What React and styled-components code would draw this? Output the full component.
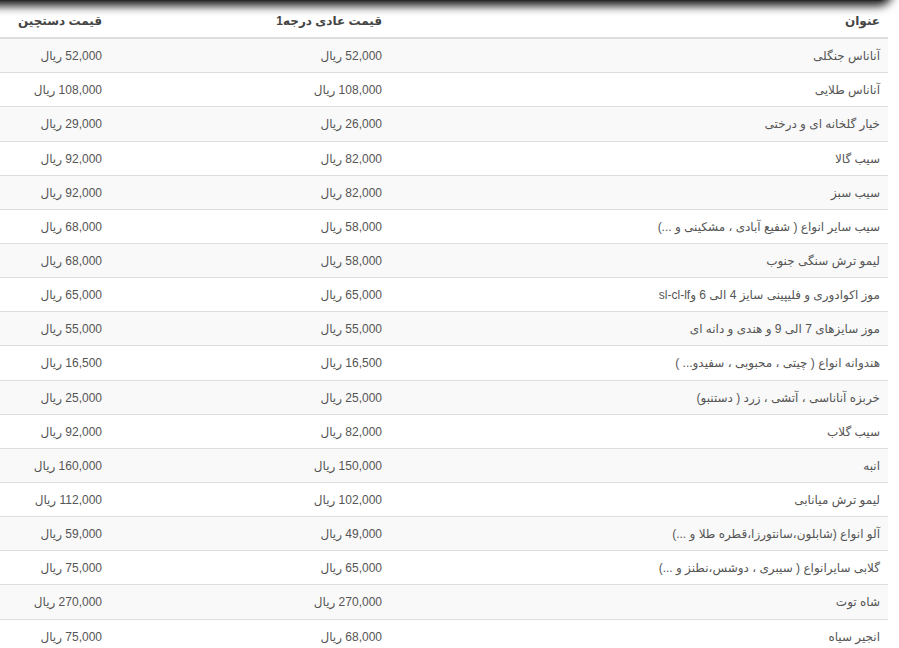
import React from 'react'
import styled, { createGlobalStyle } from 'styled-components'

const GlobalStyle = createGlobalStyle`
  html, body {
    margin: 0;
    padding: 0;
    background: #fff;
  }
  body {
    font-family: "Liberation Sans", "DejaVu Sans", sans-serif;
    font-size: 12px;
    line-height: 1.428571;
    color: #555;
  }
`

const Page = styled.div`
  position: relative;
  padding-top: 4px;
  overflow: hidden;
`

const TopShade = styled.div`
  position: absolute;
  top: -30px;
  left: -20px;
  width: 910px;
  height: 31px;
  border-radius: 12px;
  box-shadow: 0 2px 10px 3px rgba(0, 0, 0, 0.9);
  background: #2a2a2a;
`

const Table = styled.table`
  width: 888px;
  table-layout: fixed;
  border-collapse: collapse;
  border-spacing: 0;
  direction: rtl;
`

// widths are content widths; each cell adds 8px padding on both sides
const Th = styled.th`
  width: ${p => p.$w}px;
  padding: 9px 8px 7px;
  text-align: right;
  font-weight: bold;
  color: #444;
  border-bottom: 2px solid #ddd;
  vertical-align: bottom;
`

const Row = styled.tr`
  background: ${p => (p.$odd ? '#f9f9f9' : '#fff')};
`

const Td = styled.td`
  padding: 9px 8px 7px;
  text-align: right;
  border-top: 1px solid #ddd;
  vertical-align: top;
  white-space: nowrap;
`

const rows = [
  ['آناناس جنگلی', '52,000', '52,000'],
  ['آناناس طلایی', '108,000', '108,000'],
  ['خیار گلخانه ای و درختی', '26,000', '29,000'],
  ['سیب گالا', '82,000', '92,000'],
  ['سیب سبز', '82,000', '92,000'],
  ['سیب سایر انواع ( شفیع آبادی ، مشکینی و ...)', '58,000', '68,000'],
  ['لیمو ترش سنگی جنوب', '58,000', '68,000'],
  ['موز اکوادوری و فلیپینی سایز 4 الی 6 وsl-cl-lf', '65,000', '65,000'],
  ['موز سایزهای 7 الی 9 و هندی و دانه ای', '55,000', '55,000'],
  ['هندوانه انواع ( چیتی ، محبوبی ، سفیدو... )', '16,500', '16,500'],
  ['خربزه آناناسی ، آتشی ، زرد ( دستنبو)', '25,000', '25,000'],
  ['سیب گلاب', '82,000', '92,000'],
  ['انبه', '150,000', '160,000'],
  ['لیمو ترش میانابی', '102,000', '112,000'],
  ['آلو انواع (شابلون،سانتورزا،قطره طلا و ...)', '49,000', '59,000'],
  ['گلابی سایرانواع ( سیبری ، دوشس،نطنز و ...)', '65,000', '75,000'],
  ['شاه توت', '270,000', '270,000'],
  ['انجیر سیاه', '68,000', '75,000'],
]

const App = () => {
  return (
    <Page>
      <GlobalStyle />
      <TopShade />
      <Table>
        <thead>
          <tr>
            <Th $w={482}>عنوان</Th>
            <Th $w={264}>قیمت عادی درجه1</Th>
            <Th $w={94}>قیمت دستچین</Th>
          </tr>
        </thead>
        <tbody>
          {rows.map(([title, normal, picked], i) => (
            <Row key={i} $odd={i % 2 === 0}>
              <Td>{title}</Td>
              <Td>{normal} ریال</Td>
              <Td>{picked} ریال</Td>
            </Row>
          ))}
        </tbody>
      </Table>
    </Page>
  )
}

export default App
